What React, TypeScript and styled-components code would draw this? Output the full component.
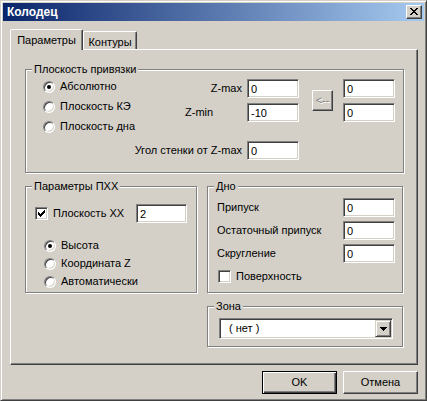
import React from "react";
import styled, { createGlobalStyle } from "styled-components";

const FACE = "#d4d0c8";
const LIGHT = "#ffffff";
const SHADOW = "#808080";
const DARK = "#404040";

const GlobalStyle = createGlobalStyle`
  html, body {
    margin: 0;
    padding: 0;
    background: ${FACE};
  }
  body {
    font-family: "Liberation Sans", Arial, sans-serif;
    font-size: 11px;
    color: #000;
  }
  * {
    box-sizing: border-box;
  }
`;

const Window = styled.div`
  width: 427px;
  height: 401px;
  background: ${FACE};
  border: 1px solid;
  border-color: ${FACE} ${DARK} ${DARK} ${FACE};
  box-shadow: inset 1px 1px 0 ${LIGHT}, inset -1px -1px 0 ${SHADOW};
  padding: 2px;
  display: flex;
  flex-direction: column;
`;

const TitleBar = styled.div`
  flex: none;
  height: 18px;
  display: flex;
  align-items: center;
  justify-content: space-between;
  padding: 0 2px 0 4px;
  background: linear-gradient(to right, #0a246a, #a6caf0);
`;

const TitleText = styled.span`
  color: #fff;
  font-weight: bold;
  font-size: 12px;
  line-height: 14px;
`;

const CaptionButton = styled.div`
  width: 16px;
  height: 14px;
  background: ${FACE};
  border: 1px solid;
  border-color: ${LIGHT} ${DARK} ${DARK} ${LIGHT};
  box-shadow: inset -1px -1px 0 ${SHADOW};
  display: flex;
  align-items: center;
  justify-content: center;
  padding-bottom: 1px;
`;

const TabStrip = styled.div`
  flex: none;
  height: 28px;
  display: flex;
  align-items: flex-end;
  padding-left: 7px;
`;

const Tab = styled.div<{ $active?: boolean; $w: number }>`
  position: relative;
  z-index: ${(p) => (p.$active ? 1 : 0)};
  width: ${(p) => p.$w}px;
  height: ${(p) => (p.$active ? 21 : 18)}px;
  margin-bottom: ${(p) => (p.$active ? -1 : 0)}px;
  padding-top: ${(p) => (p.$active ? 0 : 2)}px;
  background: ${FACE};
  border: 1px solid;
  border-bottom: none;
  border-color: ${LIGHT} ${DARK} transparent ${LIGHT};
  border-radius: 2px 2px 0 0;
  box-shadow: inset -1px 0 0 ${SHADOW};
  display: flex;
  align-items: center;
  justify-content: center;
  white-space: nowrap;
`;

const Panel = styled.div`
  flex: none;
  width: 408px;
  height: 316px;
  margin-left: 7px;
  border: 1px solid;
  border-color: ${LIGHT} ${DARK} ${DARK} ${LIGHT};
  box-shadow: inset -1px -1px 0 ${SHADOW};
  padding: 19px 0 0 14px;
  display: flex;
  flex-direction: column;
  gap: 13px;
`;

const Row = styled.div`
  display: flex;
  gap: 10px;
`;

const Column = styled.div`
  display: flex;
  flex-direction: column;
  gap: 13px;
`;

const Group = styled.div<{ $w: number; $h: number }>`
  position: relative;
  flex: none;
  width: ${(p) => p.$w}px;
  height: ${(p) => p.$h}px;
  border: 1px solid ${SHADOW};
  box-shadow: inset 1px 1px 0 ${LIGHT}, 1px 1px 0 ${LIGHT};
`;

const Legend = styled.span`
  position: absolute;
  top: -7px;
  left: 6px;
  padding: 0 2px;
  line-height: 13px;
  background: ${FACE};
  white-space: nowrap;
`;

const Text = styled.span<{ $area?: string; $justify?: string }>`
  grid-area: ${(p) => p.$area || "auto"};
  justify-self: ${(p) => p.$justify || "auto"};
  align-self: center;
  line-height: 13px;
  white-space: nowrap;
`;

const Edit = styled.input<{ $area?: string; $w?: number }>`
  grid-area: ${(p) => p.$area || "auto"};
  flex: none;
  width: ${(p) => p.$w ?? 52}px;
  height: 19px;
  margin: 0;
  padding: 0 2px 0 3px;
  background: #fff;
  border: 1px solid;
  border-color: ${SHADOW} ${LIGHT} ${LIGHT} ${SHADOW};
  box-shadow: inset 1px 1px 0 ${DARK}, inset -1px -1px 0 ${FACE};
  font: inherit;
  color: #000;
  outline: none;
  border-radius: 0;
  appearance: none;
`;

const AnchorGrid = styled.div`
  display: grid;
  grid-template-columns: 17px 142px 57px 5px 52px 13px 21px 10px 52px;
  grid-template-rows: 9px 19px 5px 19px 19px 19px;
  grid-template-areas:
    ". radios .     . .    . .   . .    "
    ". radios zmaxl . zmax . btn . zmax2"
    ". radios .     . .    . btn . .    "
    ". radios zminl . zmin . btn . zmin2"
    ". radios .     . .    . .   . .    "
    ". angl   angl  . ang  . .   . .    ";
`;

const RadioList = styled.div<{ $area?: string; $gap: number }>`
  grid-area: ${(p) => p.$area || "auto"};
  align-self: start;
  display: flex;
  flex-direction: column;
  gap: ${(p) => p.$gap}px;
`;

const Option = styled.label`
  height: 13px;
  display: flex;
  align-items: center;
  gap: 5px;
  white-space: nowrap;
  line-height: 13px;
`;

const Radio = styled.span<{ $checked?: boolean }>`
  position: relative;
  flex: none;
  width: 12px;
  height: 12px;
  border-radius: 50%;
  background: #fff;
  border: 1px solid;
  border-color: ${SHADOW} ${LIGHT} ${LIGHT} ${SHADOW};
  box-shadow: inset 1px 1px 0 ${DARK}, inset -1px -1px 0 ${FACE};

  &::after {
    content: "";
    display: ${(p) => (p.$checked ? "block" : "none")};
    position: absolute;
    left: 3px;
    top: 3px;
    width: 4px;
    height: 4px;
    border-radius: 50%;
    background: #000;
  }
`;

const CheckBox = styled.span`
  flex: none;
  width: 13px;
  height: 13px;
  background: #fff;
  border: 1px solid;
  border-color: ${SHADOW} ${LIGHT} ${LIGHT} ${SHADOW};
  box-shadow: inset 1px 1px 0 ${DARK}, inset -1px -1px 0 ${FACE};
  display: flex;
  align-items: center;
  justify-content: center;
`;

const SmallButton = styled.div<{ $area?: string }>`
  grid-area: ${(p) => p.$area || "auto"};
  align-self: center;
  width: 21px;
  height: 21px;
  background: ${FACE};
  border: 1px solid;
  border-color: ${LIGHT} ${DARK} ${DARK} ${LIGHT};
  box-shadow: inset -1px -1px 0 ${SHADOW};
  display: flex;
  align-items: center;
  justify-content: center;
  color: ${SHADOW};
  text-shadow: 1px 1px 0 ${LIGHT};
  line-height: 13px;
  padding-bottom: 1px;
`;

const PxxBody = styled.div`
  display: flex;
  flex-direction: column;
  padding: 17px 9px 0 9px;
`;

const CheckRow = styled.div`
  height: 19px;
  display: flex;
  align-items: center;
  justify-content: space-between;
`;

const PxxRadios = styled(RadioList)`
  margin: 16px 0 0 9px;
`;

const BottomBody = styled.div`
  display: flex;
  flex-direction: column;
  gap: 4px;
  padding: 11px 7px 0 9px;
`;

const FieldRow = styled.div`
  height: 19px;
  display: flex;
  align-items: center;
  justify-content: space-between;
`;

const SurfaceOption = styled(Option)`
  margin: 3px 0 0 1px;
`;

const ZoneBody = styled.div`
  padding: 11px 0 0 11px;
`;

const Combo = styled.div`
  width: 174px;
  height: 21px;
  background: #fff;
  border: 1px solid;
  border-color: ${SHADOW} ${LIGHT} ${LIGHT} ${SHADOW};
  box-shadow: inset 1px 1px 0 ${DARK}, inset -1px -1px 0 ${FACE};
  padding: 1px;
  display: flex;
  align-items: center;
`;

const ComboText = styled.span`
  flex: 1;
  padding-left: 8px;
  line-height: 13px;
  white-space: nowrap;
`;

const ComboButton = styled.div`
  flex: none;
  width: 16px;
  height: 17px;
  background: ${FACE};
  border: 1px solid;
  border-color: ${FACE} ${DARK} ${DARK} ${FACE};
  box-shadow: inset 1px 1px 0 ${LIGHT}, inset -1px -1px 0 ${SHADOW};
  display: flex;
  align-items: center;
  justify-content: center;
`;

const ButtonRow = styled.div`
  flex: none;
  display: flex;
  justify-content: flex-end;
  gap: 6px;
  margin-top: 6px;
  padding-right: 6px;
`;

const PushButton = styled.div<{ $default?: boolean }>`
  width: 75px;
  height: 23px;
  background: ${FACE};
  display: flex;
  align-items: center;
  justify-content: center;
  line-height: 13px;
  border: 1px solid;
  border-color: ${(p) =>
    p.$default ? "#000" : `${LIGHT} ${DARK} ${DARK} ${LIGHT}`};
  box-shadow: ${(p) =>
    p.$default
      ? `inset 1px 1px 0 ${LIGHT}, inset -1px -1px 0 ${DARK}, inset -2px -2px 0 ${SHADOW}`
      : `inset -1px -1px 0 ${SHADOW}`};
`;

const CloseGlyph = () => (
  <svg width="8" height="7" viewBox="0 0 8 7" shapeRendering="crispEdges">
    <path
      fill="#000"
      d="M0 0h2v1H0z M6 0h2v1H6z M1 1h2v1H1z M5 1h2v1H5z M2 2h4v1H2z M3 3h2v1H3z M2 4h4v1H2z M1 5h2v1H1z M5 5h2v1H5z M0 6h2v1H0z M6 6h2v1H6z"
    />
  </svg>
);

const CheckGlyph = () => (
  <svg width="7" height="7" viewBox="0 0 7 7" shapeRendering="crispEdges">
    <path
      fill="#000"
      d="M6 0h1v1H6z M5 1h2v1H5z M0 2h1v1H0z M4 2h3v1H4z M0 3h2v1H0z M3 3h3v1H3z M0 4h5v1H0z M1 5h3v1H1z M2 6h1v1H2z"
    />
  </svg>
);

const ArrowGlyph = () => (
  <svg width="7" height="4" viewBox="0 0 7 4" shapeRendering="crispEdges">
    <path fill="#000" d="M0 0h7v1H0z M1 1h5v1H1z M2 2h3v1H2z M3 3h1v1H3z" />
  </svg>
);

export default function App() {
  return (
    <>
      <GlobalStyle />
      <Window>
        <TitleBar>
          <TitleText>Колодец</TitleText>
          <CaptionButton aria-label="Закрыть">
            <CloseGlyph />
          </CaptionButton>
        </TitleBar>

        <TabStrip>
          <Tab $active $w={73}>Параметры</Tab>
          <Tab $w={54}>Контуры</Tab>
        </TabStrip>

        <Panel>
          <Group $w={379} $h={104}>
            <Legend>Плоскость привязки</Legend>
            <AnchorGrid>
              <RadioList $area="radios" $gap={7} style={{ paddingTop: 10 }}>
                <Option>
                  <Radio $checked />
                  Абсолютно
                </Option>
                <Option>
                  <Radio />
                  Плоскость КЭ
                </Option>
                <Option>
                  <Radio />
                  Плоскость дна
                </Option>
              </RadioList>

              <Text $area="zmaxl" $justify="end">Z-max</Text>
              <Edit $area="zmax" value="0" readOnly />
              <Edit $area="zmax2" value="0" readOnly />

              <Text $area="zminl" $justify="start">Z-min</Text>
              <Edit $area="zmin" value="-10" readOnly />
              <Edit $area="zmin2" value="0" readOnly />

              <SmallButton $area="btn">&lt;--</SmallButton>

              <Text $area="angl" $justify="end">Угол стенки от Z-max</Text>
              <Edit $area="ang" value="0" readOnly />
            </AnchorGrid>
          </Group>

          <Row>
            <Group $w={172} $h={107}>
              <Legend>Параметры ПХХ</Legend>
              <PxxBody>
                <CheckRow>
                  <Option>
                    <CheckBox>
                      <CheckGlyph />
                    </CheckBox>
                    Плоскость ХХ
                  </Option>
                  <Edit $w={51} value="2" readOnly />
                </CheckRow>
                <PxxRadios $gap={5}>
                  <Option>
                    <Radio $checked />
                    Высота
                  </Option>
                  <Option>
                    <Radio />
                    Координата Z
                  </Option>
                  <Option>
                    <Radio />
                    Автоматически
                  </Option>
                </PxxRadios>
              </PxxBody>
            </Group>

            <Column>
              <Group $w={196} $h={107}>
                <Legend>Дно</Legend>
                <BottomBody>
                  <FieldRow>
                    <Text>Припуск</Text>
                    <Edit value="0" readOnly />
                  </FieldRow>
                  <FieldRow>
                    <Text>Остаточный припуск</Text>
                    <Edit value="0" readOnly />
                  </FieldRow>
                  <FieldRow>
                    <Text>Скругление</Text>
                    <Edit value="0" readOnly />
                  </FieldRow>
                  <SurfaceOption>
                    <CheckBox />
                    Поверхность
                  </SurfaceOption>
                </BottomBody>
              </Group>

              <Group $w={196} $h={41}>
                <Legend>Зона</Legend>
                <ZoneBody>
                  <Combo>
                    <ComboText>( нет )</ComboText>
                    <ComboButton>
                      <ArrowGlyph />
                    </ComboButton>
                  </Combo>
                </ZoneBody>
              </Group>
            </Column>
          </Row>
        </Panel>

        <ButtonRow>
          <PushButton $default>OK</PushButton>
          <PushButton>Отмена</PushButton>
        </ButtonRow>
      </Window>
    </>
  );
}
